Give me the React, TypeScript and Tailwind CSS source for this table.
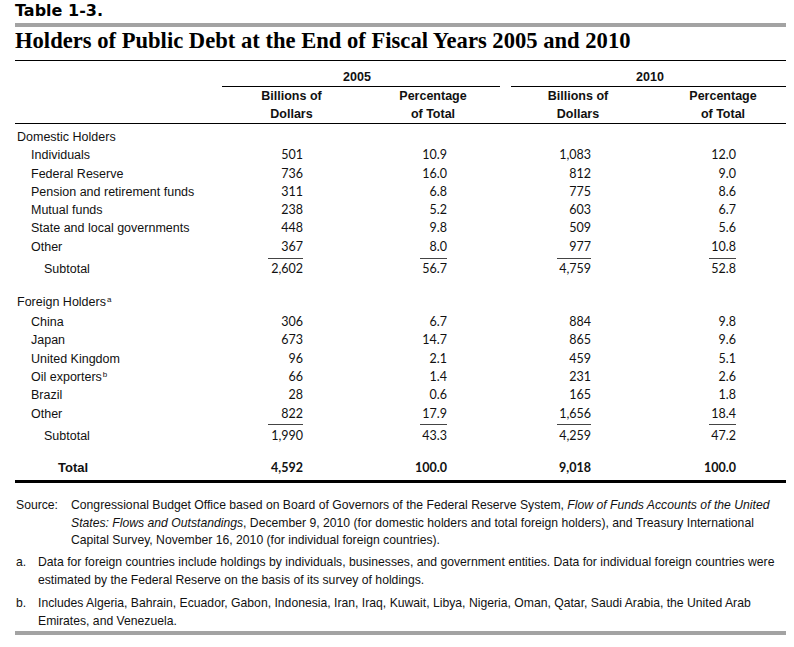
import React from "react";

type Row = { label: string; sup?: string; v: [string, string, string, string] };

const domestic: Row[] = [
  { label: "Individuals", v: ["501", "10.9", "1,083", "12.0"] },
  { label: "Federal Reserve", v: ["736", "16.0", "812", "9.0"] },
  { label: "Pension and retirement funds", v: ["311", "6.8", "775", "8.6"] },
  { label: "Mutual funds", v: ["238", "5.2", "603", "6.7"] },
  { label: "State and local governments", v: ["448", "9.8", "509", "5.6"] },
  { label: "Other", v: ["367", "8.0", "977", "10.8"] },
];

const foreign: Row[] = [
  { label: "China", v: ["306", "6.7", "884", "9.8"] },
  { label: "Japan", v: ["673", "14.7", "865", "9.6"] },
  { label: "United Kingdom", v: ["96", "2.1", "459", "5.1"] },
  { label: "Oil exporters", sup: "b", v: ["66", "1.4", "231", "2.6"] },
  { label: "Brazil", v: ["28", "0.6", "165", "1.8"] },
  { label: "Other", v: ["822", "17.9", "1,656", "18.4"] },
];

const num = "font-['Lato',sans-serif] text-[12.5px]";

function NumCells({ v, bold }: { v: string[]; bold?: boolean }) {
  const b = bold ? " font-bold" : "";
  return (
    <>
      <div className={`w-[139px] pr-[58px] text-right ${num}${b}`}>{v[0]}</div>
      <div className={`w-[139px] pr-[53px] text-right ${num}${b}`}>{v[1]}</div>
      <div className="w-[11px]" />
      <div className={`w-[137px] pr-[57px] text-right ${num}${b}`}>{v[2]}</div>
      <div className={`w-[138px] pr-[50px] text-right ${num}${b}`}>{v[3]}</div>
    </>
  );
}

function DataRow({ row }: { row: Row }) {
  return (
    <div className="flex leading-[18.3px]">
      <div className="w-[207px] pl-[16px]">
        {row.label}
        {row.sup && <sup className="text-[8px] ml-[1px]">{row.sup}</sup>}
      </div>
      <NumCells v={row.v} />
    </div>
  );
}

function RuleRow({ h, top }: { h: string; top: string }) {
  return (
    <div className={`flex ${h}`}>
      <div className="w-[207px]" />
      <div className="w-[139px] pr-[58px] flex justify-end">
        <div className={`w-[35px] h-px bg-[#444] ${top}`} />
      </div>
      <div className="w-[139px] pr-[53px] flex justify-end">
        <div className={`w-[27px] h-px bg-[#444] ${top}`} />
      </div>
      <div className="w-[11px]" />
      <div className="w-[137px] pr-[57px] flex justify-end">
        <div className={`w-[34px] h-px bg-[#444] ${top}`} />
      </div>
      <div className="w-[138px] pr-[50px] flex justify-end">
        <div className={`w-[27px] h-px bg-[#444] ${top}`} />
      </div>
    </div>
  );
}

export default function App() {
  return (
    <div className="w-[794px] h-[647px] bg-white overflow-hidden text-[#111] font-['Liberation_Sans',sans-serif] text-[12.5px]">
      <div className="ml-[15px] w-[771px]">
        <div className="h-[23px] pt-[1px] font-['DejaVu_Sans',sans-serif] font-bold text-[16px] leading-[20px] text-black">
          Table 1-3.
        </div>
        <div className="h-[4px] bg-[#a3a3a3]" />
        <h1 className="font-['Liberation_Serif',serif] font-bold text-[22.6px] leading-[27px] pb-[6px] text-black whitespace-nowrap">
          Holders of Public Debt at the End of Fiscal Years 2005 and 2010
        </h1>
        <div className="h-px bg-black" />

        {/* column heads */}
        <div className="flex font-bold leading-[18px]">
          <div className="w-[207px]" />
          <div className="w-[278px] pt-[7px] border-b border-black text-center pr-[8px]">2005</div>
          <div className="w-[11px]" />
          <div className="w-[275px] pt-[7px] border-b border-black text-center pl-[3px]">2010</div>
        </div>
        <div className="flex font-bold leading-[18px] border-b border-black">
          <div className="w-[207px]" />
          <div className="w-[139px] text-center">Billions of<br />Dollars</div>
          <div className="w-[139px] text-center pl-[5px]">Percentage<br />of Total</div>
          <div className="w-[11px]" />
          <div className="w-[137px] text-center pr-[3px]">Billions of<br />Dollars</div>
          <div className="w-[138px] text-center pl-[12px]">Percentage<br />of Total</div>
        </div>

        {/* domestic */}
        <div className="mt-[4px] pl-[2px] leading-[18.3px]">Domestic Holders</div>
        {domestic.map((r) => (
          <DataRow key={"d" + r.label} row={r} />
        ))}
        <RuleRow h="h-[4px]" top="mt-[2px]" />
        <div className="flex leading-[18.3px]">
          <div className="w-[207px] pl-[29px]">Subtotal</div>
          <NumCells v={["2,602", "56.7", "4,759", "52.8"]} />
        </div>

        {/* foreign */}
        <div className="mt-[15px] pl-[2px] leading-[18.3px]">
          Foreign Holders<sup className="text-[8px] ml-[1px]">a</sup>
        </div>
        <div className="mt-[1.4px]">
          {foreign.map((r) => (
            <DataRow key={"f" + r.label} row={r} />
          ))}
        </div>
        <RuleRow h="h-[4.5px]" top="mt-[1.4px]" />
        <div className="flex leading-[18.3px]">
          <div className="w-[207px] pl-[29px]">Subtotal</div>
          <NumCells v={["1,990", "43.3", "4,259", "47.2"]} />
        </div>

        <div className="flex leading-[18.3px] mt-[13px] font-bold text-[13px]">
          <div className="w-[207px] pl-[43px]">Total</div>
          <NumCells v={["4,592", "100.0", "9,018", "100.0"]} bold />
        </div>
        <div className="mt-[3px] h-[3px] bg-black" />

        {/* notes */}
        <div className="mt-[14px] text-[12.2px] leading-[17.7px]">
          <div className="flex">
            <div className="w-[56px] pl-[1px] shrink-0">Source:</div>
            <div className="whitespace-nowrap">
              Congressional Budget Office based on Board of Governors of the Federal Reserve System,{" "}
              <i>Flow of Funds Accounts of the United</i>
              <br />
              <i>States: Flows and Outstandings</i>, December 9, 2010 (for domestic holders and total foreign holders), and Treasury International
              <br />
              Capital Survey, November 16, 2010 (for individual foreign countries).
            </div>
          </div>
          <div className="flex mt-[4px]">
            <div className="w-[23px] pl-[1px] shrink-0">a.</div>
            <div className="whitespace-nowrap">
              Data for foreign countries include holdings by individuals, businesses, and government entities. Data for individual foreign countries were
              <br />
              estimated by the Federal Reserve on the basis of its survey of holdings.
            </div>
          </div>
          <div className="flex mt-[6px]">
            <div className="w-[23px] pl-[1px] shrink-0">b.</div>
            <div className="whitespace-nowrap">
              Includes Algeria, Bahrain, Ecuador, Gabon, Indonesia, Iran, Iraq, Kuwait, Libya, Nigeria, Oman, Qatar, Saudi Arabia, the United Arab
              <br />
              Emirates, and Venezuela.
            </div>
          </div>
        </div>
        <div className="h-[4px] bg-[#a3a3a3]" />
      </div>
    </div>
  );
}
